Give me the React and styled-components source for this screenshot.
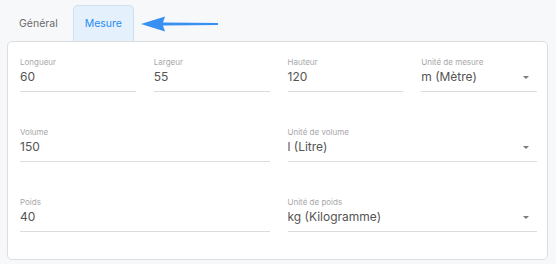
import React from 'react'
import styled, { createGlobalStyle } from 'styled-components'

const Global = createGlobalStyle`
  body {
    margin: 0;
    background: #f7f8fa;
    font-family: Inter, "Liberation Sans", sans-serif;
  }
`

const Page = styled.div`
  width: 556px;
  height: 264px;
  padding: 5px 8px 0 7px;
  box-sizing: border-box;
`

const TabBar = styled.div`
  display: flex;
  align-items: center;
  height: 36px;
`

const Tab = styled.div`
  height: 36px;
  box-sizing: border-box;
  display: flex;
  align-items: center;
  padding: 0 11px;
  margin-right: 3px;
  font-size: 10.5px;
  color: ${p => (p.active ? '#2a8cf0' : '#6b6b6b')};
  background: ${p => (p.active ? '#e4f1fd' : 'transparent')};
  border: 1px solid ${p => (p.active ? '#cfe0f0' : 'transparent')};
  border-bottom: none;
  border-radius: 5px 5px 0 0;
`

const Arrow = styled.svg`
  margin-left: 4px;
  margin-top: 1px;
`

const Card = styled.div`
  background: #fff;
  border: 1px solid #dedede;
  border-radius: 5px;
  padding: 15px 10px 27px 12px;
  display: grid;
  grid-template-columns: repeat(4, 1fr);
  column-gap: 18px;
  row-gap: 35px;
`

const Field = styled.div`
  grid-column: span ${p => p.span || 1};
  border-bottom: 1px solid #dcdcdc;
  padding-bottom: 6px;
`

const Label = styled.div`
  font-size: 8px;
  line-height: 10px;
  color: #a8a8a8;
  margin-bottom: 2px;
`

const Value = styled.div`
  display: flex;
  align-items: center;
  justify-content: space-between;
  font-size: 12px;
  line-height: 16px;
  color: #545454;
`

const Caret = styled.span`
  width: 0;
  height: 0;
  border-left: 3px solid transparent;
  border-right: 3px solid transparent;
  border-top: 3px solid #7a7a7a;
  margin-right: 8px;
`

const fields = [
  { label: 'Longueur', value: '60' },
  { label: 'Largeur', value: '55' },
  { label: 'Hauteur', value: '120' },
  { label: 'Unité de mesure', value: 'm (Mètre)', select: true },
  { label: 'Volume', value: '150', span: 2 },
  { label: 'Unité de volume', value: 'l (Litre)', select: true, span: 2 },
  { label: 'Poids', value: '40', span: 2 },
  { label: 'Unité de poids', value: 'kg (Kilogramme)', select: true, span: 2 },
]

export default function App() {
  return (
    <>
      <Global />
      <Page>
        <TabBar>
          <Tab>Général</Tab>
          <Tab active>Mesure</Tab>
          <Arrow width="78" height="18" viewBox="0 0 78 18">
            <path d="M0 9 L24 1.5 L22 7.6 L77 7.9 L77 10.1 L22 10.4 L24 16.5 Z" fill="#3790f2" />
          </Arrow>
        </TabBar>
        <Card>
          {fields.map(f => (
            <Field key={f.label} span={f.span}>
              <Label>{f.label}</Label>
              <Value>
                <span>{f.value}</span>
                {f.select && <Caret />}
              </Value>
            </Field>
          ))}
        </Card>
      </Page>
    </>
  )
}
